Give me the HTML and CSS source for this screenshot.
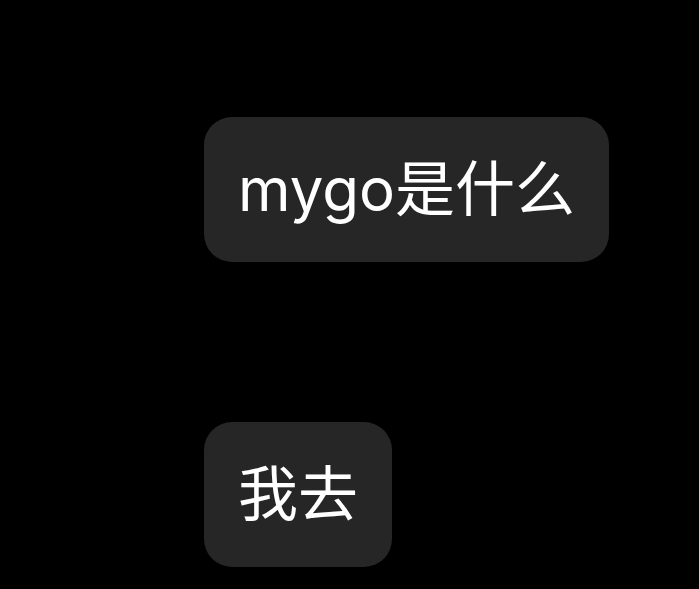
FILE: index.html
```html
<!DOCTYPE html>
<html lang="zh-CN">
<head>
<meta charset="utf-8">
<link rel="stylesheet" href="styles.css">
</head>
<body>
<div class="chat">
  <div class="bubble">mygo是什么</div>
  <div class="bubble">我去</div>
</div>
</body>
</html>
```
FILE: styles.css
```css
html, body {
  margin: 0;
  padding: 0;
  background: #000;
  height: 100%;
  overflow: hidden;
}
.chat {
  display: flex;
  flex-direction: column;
  align-items: flex-start;
  gap: 160px;
  padding: 117px 0 0 204px;
}
.bubble {
  background: #262626;
  color: #fff;
  font-family: Inter, "Noto Sans CJK SC", sans-serif;
  font-size: 60px;
  height: 145px;
  line-height: 145px;
  padding: 0 34px;
  border-radius: 28px;
  white-space: nowrap;
}
```
